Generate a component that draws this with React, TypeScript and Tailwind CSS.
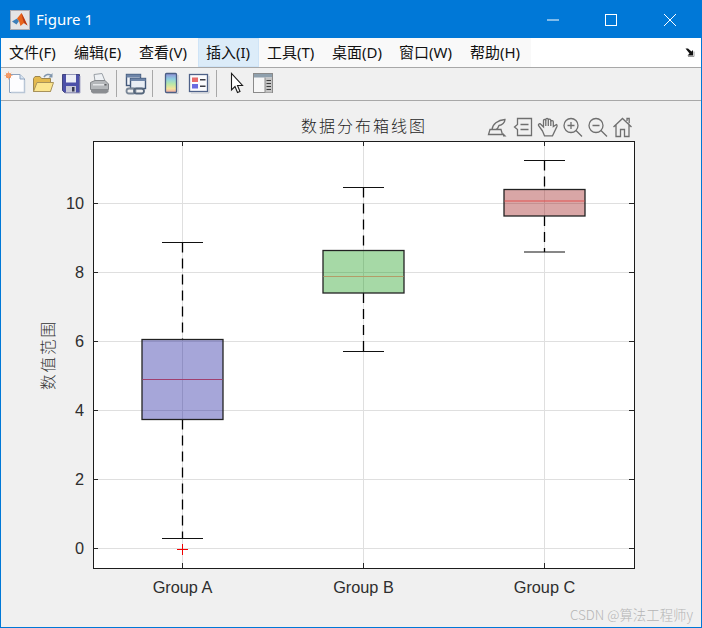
const menuItems = [
  { label: '文件(F)', width: 'w-[65px]', active: false },
  { label: '编辑(E)', width: 'w-[65px]', active: false },
  { label: '查看(V)', width: 'w-[67px]', active: false },
  { label: '插入(I)', width: 'w-[61px]', active: true },
  { label: '工具(T)', width: 'w-[65px]', active: false },
  { label: '桌面(D)', width: 'w-[67px]', active: false },
  { label: '窗口(W)', width: 'w-[71px]', active: false },
  { label: '帮助(H)', width: 'w-[69px]', active: false },
];

const yTicks = [
  { label: '0', y: 548.5 },
  { label: '2', y: 479.5 },
  { label: '4', y: 410.5 },
  { label: '6', y: 341.5 },
  { label: '8', y: 272.5 },
  { label: '10', y: 203.5 },
];

const boxes = [
  { name: 'Group A', x: 182.5, top: 339.5, bottom: 419.5, median: 379.5, capTop: 242.5, capBottom: 538.5, fill: '#000092', line: '#a0406f' },
  { name: 'Group B', x: 363.5, top: 250.5, bottom: 293, median: 276.5, capTop: 187.5, capBottom: 351.5, fill: '#009200', line: '#b39c68' },
  { name: 'Group C', x: 544.5, top: 189.5, bottom: 216, median: 201, capTop: 160.5, capBottom: 252, fill: '#920000', line: '#e2504f' },
];

const Icon = ({ children }: { children: React.ReactNode }) => (
  <svg width="24" height="24" viewBox="0 0 24 24" className="shrink-0">
    {children}
  </svg>
);

const Separator = ({ className }: { className: string }) => (
  <div className={`h-[27px] w-px bg-[#a8a8a8] ${className}`} />
);

const MatlabLogo = () => (
  <svg width="20" height="20" viewBox="0 0 20 20" className="shrink-0">
    <rect x="0.5" y="0.5" width="19" height="19" fill="#e4e4e6" stroke="#a9a9b0" />
    <path d="M2 11.5 7 8.5 9 11 6.5 14.5Z" fill="#3f7fb8" />
    <path d="M7 8.5 11.5 3 14 8 17.5 15.5 14 13 10.5 16 9 11Z" fill="#e8641c" />
    <path d="M11.5 3 14 8 17.5 15.5 14 13 12.5 8Z" fill="#b93a16" />
  </svg>
);

const WindowControls = () => (
  <div className="flex h-full items-center">
    <svg width="12" height="12" viewBox="0 0 12 12" className="ml-[546px]">
      <path d="M0 6H12" stroke="#ffffff" strokeWidth="1" />
    </svg>
    <svg width="12" height="12" viewBox="0 0 12 12" className="ml-[46px]">
      <rect x="0.5" y="0.5" width="11" height="11" fill="none" stroke="#ffffff" />
    </svg>
    <svg width="12" height="12" viewBox="0 0 12 12" className="ml-[47px]">
      <path d="M0 0 12 12M12 0 0 12" stroke="#ffffff" strokeWidth="1" />
    </svg>
  </div>
);

const Toolbar = () => (
  <div className="flex h-[33px] items-center border-b border-[#a8a8a8] bg-[#f0f0f0] pb-[2px] pl-[2px]">
    <div className="flex items-center gap-[4px]">
      <Icon>
        <path d="M6.5 3.5H17L21.5 8V21.5H6.5Z" fill="#fdfdff" stroke="#8fa4bf" />
        <path d="M17 3.5V8H21.5" fill="#d8e4f2" stroke="#8fa4bf" />
        <path d="M21.5 9V21.5H8" fill="none" stroke="#b9c6d6" strokeWidth="1.5" />
        <circle cx="5.5" cy="4.5" r="2.6" fill="#f0884a" />
        <path d="M5.5 0.5V8.5M1.5 4.5H9.5M2.8 1.8 8.2 7.2M8.2 1.8 2.8 7.2" stroke="#f4a070" strokeWidth="0.8" />
      </Icon>
      <Icon>
        <path d="M2.5 20.5V7.5L4 5.5H9L10.5 7.5H19.5V20.5Z" fill="#e3b94e" stroke="#9c8650" />
        <path d="M2.5 20.5 6 11.5H22.5L19.5 20.5Z" fill="#fbe58f" stroke="#a8925a" />
        <path d="M13 6C14.5 3.5 18 2.5 20.5 4.5" fill="none" stroke="#7f95ad" strokeWidth="1.5" />
        <path d="M21.5 2V6.5H17.5" fill="#7f95ad" />
      </Icon>
      <Icon>
        <path d="M3.5 3.5H20.5V21.5H5.5L3.5 19.5Z" fill="#4c50a8" stroke="#40447f" />
        <rect x="7" y="3.5" width="10" height="8" fill="#eceef6" />
        <rect x="7" y="15" width="10" height="6.5" fill="#c9cad8" />
        <rect x="13" y="16" width="2.5" height="4.5" fill="#35374f" />
        <path d="M21 5V22H6" fill="none" stroke="#a9aac8" />
      </Icon>
      <Icon>
        <path d="M7 3.5 15 2.5 18 10H8Z" fill="#eef1f4" stroke="#9aa0a6" />
        <path d="M3.5 11.5 8 9.5H18L21.5 13V18.5H3.5Z" fill="#b4b7ba" stroke="#85888c" />
        <path d="M4 18.5H21.5V21L19 22.5H6L4 21Z" fill="#8b8e92" />
        <rect x="6" y="13" width="11" height="1.5" fill="#e4e6e8" />
        <rect x="17.5" y="13" width="2" height="1.5" fill="#5d5f62" />
      </Icon>
    </div>
    <Separator className="ml-[5px] mr-[6px]" />
    <Icon>
      <rect x="3.5" y="3.5" width="14" height="11" fill="#f2f5fa" stroke="#42587a" strokeWidth="1.4" />
      <rect x="3.5" y="3.5" width="14" height="3" fill="#6e85a8" />
      <rect x="7.5" y="7.5" width="15" height="10" fill="#e8edf4" stroke="#42587a" strokeWidth="1.4" />
      <rect x="7.5" y="7.5" width="15" height="2.5" fill="#6e85a8" />
      <rect x="3.5" y="17.5" width="9" height="5" rx="2.5" fill="none" stroke="#7a8797" strokeWidth="1.8" />
      <rect x="11" y="17.5" width="10" height="5" rx="2.5" fill="none" stroke="#56677c" strokeWidth="1.8" />
    </Icon>
    <Separator className="ml-[5px] mr-[6px]" />
    <div className="flex items-center gap-[4px]">
      <Icon>
        <defs>
          <linearGradient id="colorbar-fill" x1="0" y1="0" x2="0" y2="1">
            <stop offset="0" stopColor="#8f8fd8" />
            <stop offset="0.3" stopColor="#8fd0e0" />
            <stop offset="0.55" stopColor="#b8e8a8" />
            <stop offset="0.8" stopColor="#f6e39a" />
            <stop offset="1" stopColor="#eea2a8" />
          </linearGradient>
        </defs>
        <rect x="6.5" y="2.5" width="11" height="19" rx="1" fill="url(#colorbar-fill)" stroke="#4c5f85" strokeWidth="1.3" />
        <path d="M19 4V22.5H8" fill="none" stroke="#c0c4cc" />
      </Icon>
      <Icon>
        <rect x="2.5" y="3.5" width="18" height="17" fill="#fbfbfd" stroke="#4e6188" strokeWidth="1.3" />
        <path d="M22 5V22H4" fill="none" stroke="#c0c4cc" />
        <rect x="5" y="6.5" width="6" height="4.5" fill="#e86a6a" />
        <rect x="5" y="13" width="6" height="4.5" fill="#6a6ae0" />
        <rect x="13" y="8" width="5.5" height="1.5" fill="#3c3c46" />
        <rect x="13" y="14.5" width="5.5" height="1.5" fill="#3c3c46" />
      </Icon>
    </div>
    <Separator className="ml-[5px] mr-[7px]" />
    <Icon>
      <path d="M7.5 2.5V19L11 15.5 13.5 21.5 16 20.5 13.5 14.5H18.5Z" fill="#ffffff" stroke="#1c1c1c" strokeWidth="1.1" />
    </Icon>
    <div className="ml-[3px]">
      <Icon>
        <rect x="2.5" y="2.5" width="19" height="19" fill="#f6f6f6" stroke="#8a8a8a" />
        <rect x="3" y="3" width="18" height="3.5" fill="#8fa0ad" />
        <rect x="14" y="6.5" width="7" height="15" fill="#c4c4c4" />
        <path d="M15.5 9.5H20M15.5 12.5H20M15.5 15.5H20M15.5 18.5H20" stroke="#3e3e3e" strokeWidth="1.2" />
        <path d="M14 6.5V21.5" stroke="#8a8a8a" />
      </Icon>
    </div>
  </div>
);

const AxesToolbar = () => (
  <g fill="none" stroke="#6f6f6f" strokeWidth="1.3">
    {/* brush */}
    <path d="M488.5 134.5H502.5L501 129.5H490ZM492 129.5C492.5 124.5 497.5 120 505 119.5C505 122.5 502 125 499 125.5C498.5 127.5 497 129 495.5 129.5" />
    <path d="M503 136.5V133L506.5 136.5Z" fill="#6f6f6f" stroke="none" />
    {/* legend */}
    <path d="M517.5 118.5H531.5V135.5H517.5V129.5L514.5 127 517.5 124.5Z" />
    <path d="M520.5 124.5H528.5M520.5 129.5H528.5" />
    {/* hand */}
    <path d="M542.5 131 538.5 125.5C538 124 540 123 541 124.5L543.5 127V120.5C543.5 119 545.8 119 545.8 120.5V119.5C545.8 118 548.3 118 548.3 119.5V120C548.3 118.8 550.8 118.8 550.8 120.3V121.5C551 120.2 553.3 120.4 553.3 121.8V126.5L556.5 124.5C557.5 125 557 127 556.5 127.5L552.5 135.8H544.5Z" />
    <path d="M545.8 120V126M548.3 119.5V126M550.8 120.5V126" />
    {/* zoom in */}
    <circle cx="571" cy="125.5" r="7" />
    <path d="M576 130.5 582 136.5M567.5 125.5H574.5M571 122V129" />
    {/* zoom out */}
    <circle cx="596" cy="125.5" r="7" />
    <path d="M601 130.5 607 136.5M592.5 125.5H599.5" />
    {/* home */}
    <path d="M613.5 127 622.5 118.5 631.5 127M616 125V136.5H620.5V129.5H624.5V136.5H629V125M627 121V118.5H629.2V123.2" />
  </g>
);

const Chart = () => (
  <svg width="700" height="526" viewBox="1 101 700 526" className="block">
    {/* axes background */}
    <rect x="93.5" y="141.5" width="541" height="427" fill="#ffffff" />

    {/* grid */}
    <g stroke="#dfdfdf" strokeWidth="1">
      {yTicks.map((t) => (
        <path key={t.label} d={`M93 ${t.y}H634`} />
      ))}
      {boxes.map((b) => (
        <path key={b.name} d={`M${b.x} 141V568`} />
      ))}
    </g>

    {/* boxes */}
    {boxes.map((b) => (
      <g key={b.name}>
        <path d={`M${b.x} ${b.capTop}V${b.top}M${b.x} ${b.bottom}V${b.capBottom}`} stroke="#000000" strokeWidth="1.3" strokeDasharray="10 6" />
        <path d={`M${b.x - 20.5} ${b.capTop}H${b.x + 20.5}M${b.x - 20.5} ${b.capBottom}H${b.x + 20.5}`} stroke="#111111" strokeWidth="1.1" />
        <rect x={b.x - 40.5} y={b.top} width="81" height={b.bottom - b.top} fill={b.fill} fillOpacity="0.35" stroke="#222222" strokeWidth="1.3" />
        <path d={`M${b.x - 40} ${b.median}H${b.x + 40}`} stroke={b.line} strokeWidth="1.2" />
      </g>
    ))}

    {/* outlier */}
    <path d="M177 549.5H188M182.5 544V555" stroke="#f00000" strokeWidth="1" />

    {/* axes box and ticks */}
    <rect x="93.5" y="141.5" width="541" height="427" fill="none" stroke="#1c1c1c" strokeWidth="1" />
    <g stroke="#262626" strokeWidth="1">
      {yTicks.map((t) => (
        <path key={t.label} d={`M93 ${t.y}H98M629 ${t.y}H634`} />
      ))}
      {boxes.map((b) => (
        <path key={b.name} d={`M${b.x} 141V146M${b.x} 563V568`} />
      ))}
    </g>

    {/* labels */}
    <g fill="#2e2e2e" fontSize="16.3" fontFamily='"Liberation Sans", Arial, sans-serif'>
      {yTicks.map((t) => (
        <text key={t.label} x="84" y={t.y + 5.5} textAnchor="end">
          {t.label}
        </text>
      ))}
      {boxes.map((b) => (
        <text key={b.name} x={b.x} y="593" textAnchor="middle">
          {b.name}
        </text>
      ))}
    </g>
    <text x="301" y="132" fill="#1f1f1f" fontSize="16" letterSpacing="2" fontWeight="300" fontFamily='"Noto Sans CJK SC", sans-serif'>
      数据分布箱线图
    </text>
    <text
      transform="translate(54 390) rotate(-90)"
      fill="#333333"
      fontSize="15.5"
      letterSpacing="2"
      fontWeight="300"
      fontFamily='"Noto Sans CJK SC", sans-serif'
    >
      数值范围
    </text>
    <AxesToolbar />
  </svg>
);

export default function App() {
  return (
    <div className="flex h-[628px] w-[702px] flex-col overflow-hidden border border-[#0078d7] bg-[#f0f0f0] font-['Noto_Sans','Noto_Sans_CJK_SC',sans-serif]">
      {/* title bar */}
      <div className="relative flex h-[37px] shrink-0 items-center bg-[#0078d7] pl-[9px] text-white">
        <MatlabLogo />
        <span className="ml-[6px] text-[15px]">Figure 1</span>
        <div className="absolute inset-0">
          <WindowControls />
        </div>
      </div>

      {/* menu bar */}
      <div className="flex h-[30px] shrink-0 items-stretch border-b border-[#a8a8a8] bg-white text-[15px] text-[#111111]">
        <div className="flex bg-[#f9f9f9]">
          {menuItems.map((item) => (
            <div
              key={item.label}
              className={`flex items-center whitespace-nowrap ${item.width} ${
                item.active ? 'border border-[#cfe4f7] bg-[#dcecf9] pl-[7px]' : 'pl-[8px]'
              }`}
            >
              {item.label}
            </div>
          ))}
        </div>
        <div className="flex flex-1 items-center justify-end pr-[5px]">
          <svg width="11" height="9" viewBox="0 0 11 9">
            <path d="M0.5 0.5 3 0.5 6.5 3.5 8 2V7.5H2.5L4.5 5.5Z" fill="#111111" />
            <path d="M9 3.5V8.5H3" fill="none" stroke="#9a9a9a" />
          </svg>
        </div>
      </div>

      <Toolbar />

      {/* figure */}
      <div className="relative flex-1 bg-[#f0f0f0]">
        <Chart />
        <span className="absolute right-[8px] bottom-[3px] font-['Noto_Sans_CJK_SC',sans-serif] text-[13.4px] font-light text-[#b5b5b5]">
          CSDN @算法工程师y
        </span>
      </div>
    </div>
  );
}
